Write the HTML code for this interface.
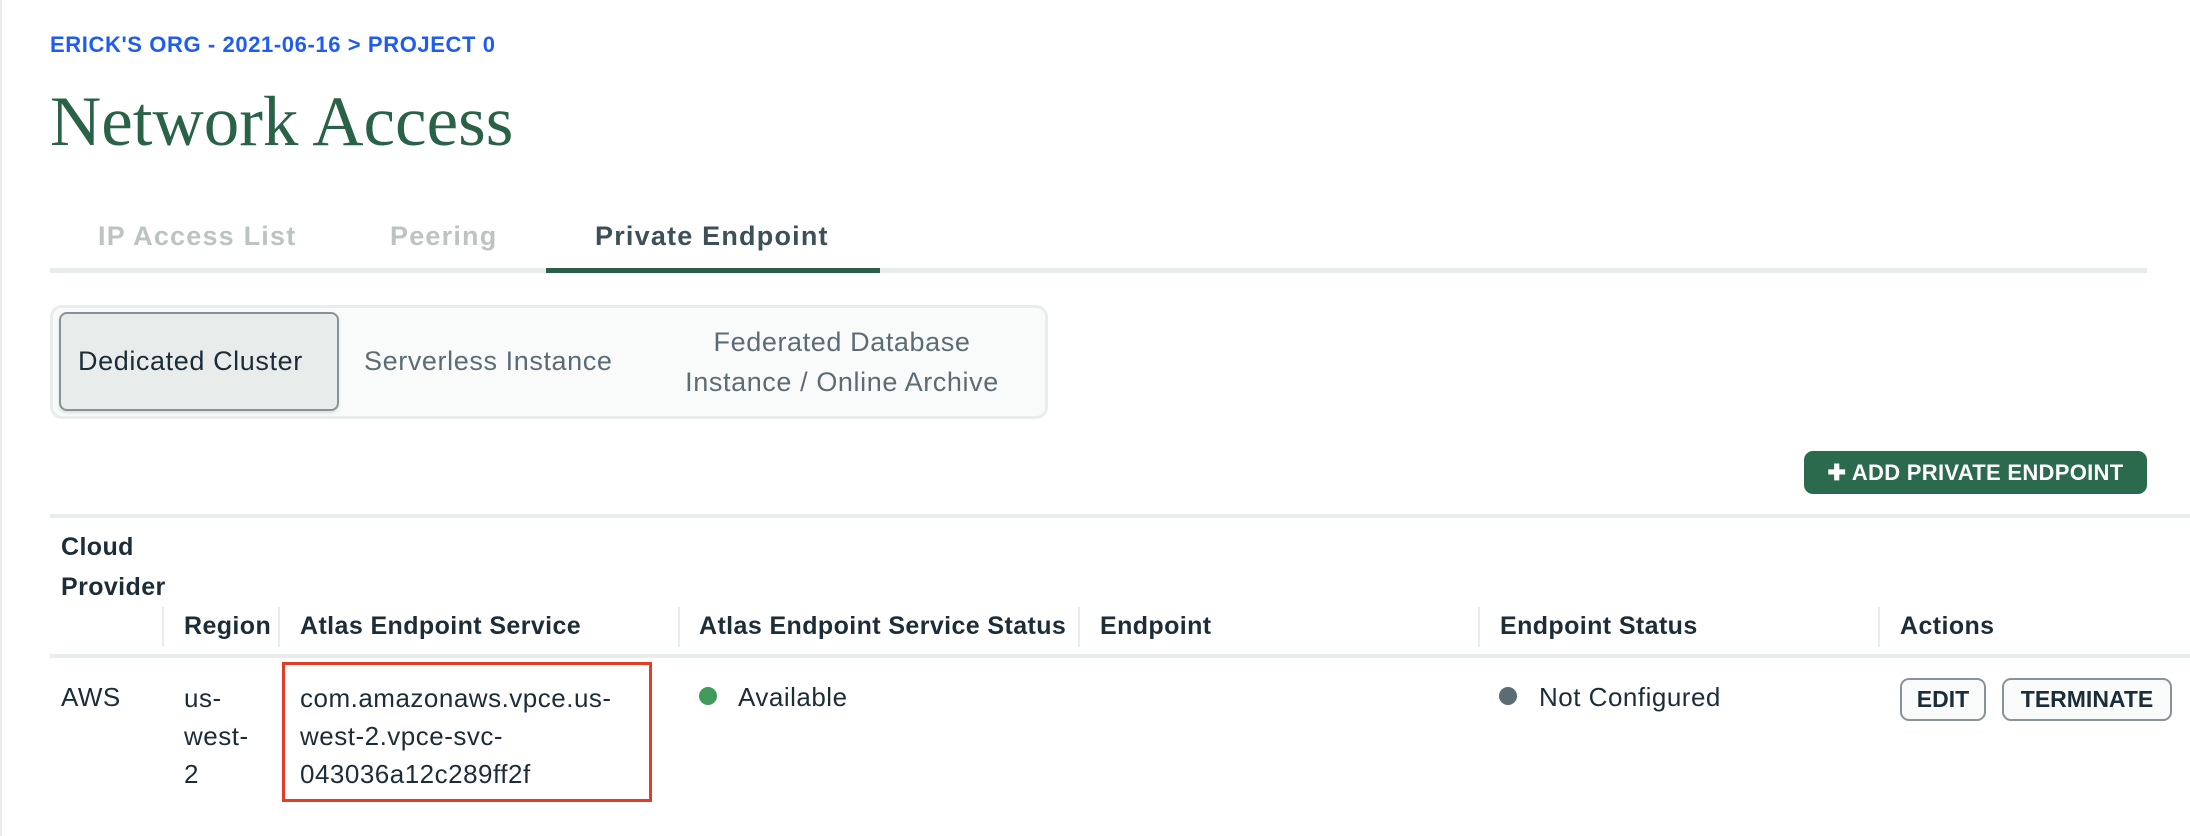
<!DOCTYPE html>
<html><head><meta charset="utf-8"><style>
*{margin:0;padding:0;box-sizing:border-box}
body{width:2190px;height:836px;background:#fff;position:relative;overflow:hidden;font-family:"Liberation Sans",sans-serif;color:#1c2d38}
.a{position:absolute;white-space:nowrap}
.b{font-weight:bold}
.hd{font-weight:bold;font-size:25px;color:#1c2d38;letter-spacing:0.4px}
.td{font-size:26px;color:#1c2d38;letter-spacing:0.5px}
.vd{position:absolute;top:607px;width:2px;height:40px;background:#e8edeb}
.btn{position:absolute;border:2px solid #889397;background:#f9fbfa;border-radius:9px;font-weight:bold;font-size:23px;display:flex;align-items:center;justify-content:center;color:#1c2d38}
</style></head><body>
<div class="a" style="left:0;top:0;width:2px;height:836px;background:#ececec"></div>
<div class="a b" style="left:50px;top:32px;font-size:22px;color:#1f5cf0;letter-spacing:0.6px">ERICK'S ORG - 2021-06-16 &gt; PROJECT 0</div>
<div class="a" style="left:50px;top:82px;font-family:'Liberation Serif',serif;font-size:71px;color:#2a6247;line-height:80px">Network Access</div>

<div class="a b" style="left:98px;top:221px;font-size:27px;color:#bcc4c3;letter-spacing:1.2px">IP Access List</div>
<div class="a b" style="left:390px;top:221px;font-size:27px;color:#bcc4c3;letter-spacing:1.2px">Peering</div>
<div class="a b" style="left:595px;top:221px;font-size:27px;color:#3d4f58;letter-spacing:1.2px">Private Endpoint</div>
<div class="a" style="left:50px;top:268px;width:2097px;height:5px;background:#e8edeb"></div>
<div class="a" style="left:546px;top:268px;width:334px;height:5px;background:#2a5e46"></div>

<div class="a" style="left:50px;top:305px;width:998px;height:114px;background:#f9fbfa;border:3px solid #e8edeb;border-radius:12px"></div>
<div class="a" style="left:59px;top:312px;width:280px;height:99px;background:#e8edeb;border:2px solid #889397;border-radius:8px;box-shadow:0 2px 3px rgba(0,0,0,.12)"></div>
<div class="a" style="left:78px;top:346px;font-size:27px;color:#1c2d38;letter-spacing:0.6px">Dedicated Cluster</div>
<div class="a" style="left:364px;top:346px;font-size:27px;color:#5c6c75;letter-spacing:0.6px">Serverless Instance</div>
<div class="a" style="left:642px;top:322px;width:400px;text-align:center;font-size:27px;color:#5c6c75;line-height:40px;white-space:normal;letter-spacing:0.6px">Federated Database<br>Instance / Online Archive</div>

<div class="a b" style="left:1804px;top:451px;width:343px;height:43px;background:#2b6a4c;border-radius:9px;color:#fff;font-size:22px;letter-spacing:0.3px;display:flex;align-items:center;justify-content:center">✚ ADD PRIVATE ENDPOINT</div>

<div class="a" style="left:50px;top:514px;width:2140px;height:4px;background:#e8edeb"></div>
<div class="a hd" style="left:61px;top:527px;line-height:40px">Cloud<br>Provider</div>
<div class="vd" style="left:162px"></div><div class="vd" style="left:278px"></div><div class="vd" style="left:678px"></div><div class="vd" style="left:1078px"></div><div class="vd" style="left:1478px"></div><div class="vd" style="left:1878px"></div>
<div class="a hd" style="left:184px;top:612px">Region</div>
<div class="a hd" style="left:300px;top:612px">Atlas Endpoint Service</div>
<div class="a hd" style="left:699px;top:612px">Atlas Endpoint Service Status</div>
<div class="a hd" style="left:1100px;top:612px">Endpoint</div>
<div class="a hd" style="left:1500px;top:612px">Endpoint Status</div>
<div class="a hd" style="left:1900px;top:612px">Actions</div>
<div class="a" style="left:50px;top:654px;width:2140px;height:4px;background:#e8edeb"></div>

<div class="a td" style="left:61px;top:682px">AWS</div>
<div class="a td" style="left:184px;top:679px;line-height:38px">us-<br>west-<br>2</div>
<div class="a" style="left:282px;top:662px;width:370px;height:140px;border:3px solid #e23d26"></div>
<div class="a td" style="left:300px;top:679px;line-height:38px">com.amazonaws.vpce.us-<br>west-2.vpce-svc-<br>043036a12c289ff2f</div>
<div class="a" style="left:699px;top:687px;width:18px;height:18px;border-radius:50%;background:#3f9a5c"></div>
<div class="a td" style="left:738px;top:682px">Available</div>
<div class="a" style="left:1499px;top:687px;width:18px;height:18px;border-radius:50%;background:#5c6c75"></div>
<div class="a td" style="left:1539px;top:682px">Not Configured</div>
<div class="btn" style="left:1900px;top:678px;width:86px;height:43px">EDIT</div>
<div class="btn" style="left:2002px;top:678px;width:170px;height:43px">TERMINATE</div>
</body></html>
